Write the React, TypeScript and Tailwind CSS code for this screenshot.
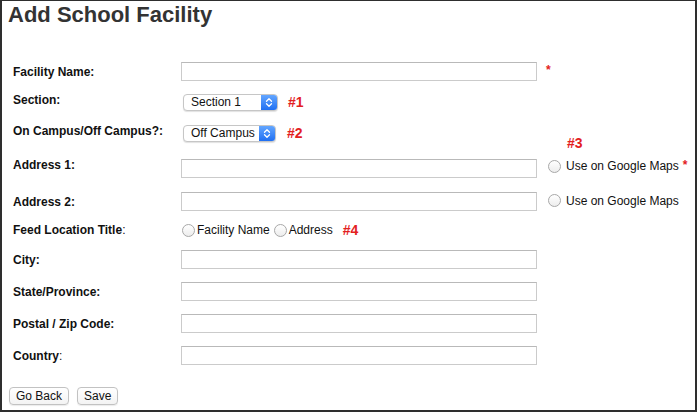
import React from "react";

const Label = ({
  children,
  className = "",
}: {
  children: React.ReactNode;
  className?: string;
}) => (
  <div
    className={`w-[168px] shrink-0 text-[12px] leading-[14px] font-bold text-[#111] ${className}`}
  >
    {children}
  </div>
);

const TextInput = ({ className = "" }: { className?: string }) => (
  <input
    type="text"
    className={`block w-[356px] h-[19px] shrink-0 border border-[#cbcbcb] border-t-[#b9b9b9] bg-white px-1 text-[12px] outline-none ${className}`}
  />
);

const Radio = () => (
  <span className="inline-block w-[13px] h-[13px] shrink-0 rounded-full border border-[#a8a8a8] bg-gradient-to-b from-white to-[#ededed]" />
);

const Hash = ({
  children,
  className = "leading-[17px]",
}: {
  children: React.ReactNode;
  className?: string;
}) => (
  <span className={`text-[14px] font-bold text-[#e3211e] ${className}`}>{children}</span>
);

const Star = ({ className = "" }: { className?: string }) => (
  <span className={`text-[12px] leading-[14px] font-bold text-[#e3211e] ${className}`}>*</span>
);

const MacSelect = ({ label, width }: { label: string; width: string }) => (
  <div
    className={`flex h-[17px] ${width} overflow-hidden rounded-[4px] border border-[#c6c6c6] bg-white shadow-[0_1px_1px_rgba(0,0,0,0.12)]`}
  >
    <span className="flex-1 pl-[7px] text-[12px] leading-[15px] text-[#111] whitespace-nowrap">
      {label}
    </span>
    <span className="flex w-[16px] items-center justify-center bg-gradient-to-b from-[#63a6ff] to-[#1f6ff2]">
      <svg width="8" height="11" viewBox="0 0 8 11">
        <path
          d="M1.5 4.2 L4 1.7 L6.5 4.2 M1.5 6.8 L4 9.3 L6.5 6.8"
          stroke="white"
          strokeWidth="1.3"
          fill="none"
          strokeLinecap="round"
          strokeLinejoin="round"
        />
      </svg>
    </span>
  </div>
);

const Button = ({ children }: { children: React.ReactNode }) => (
  <button
    type="button"
    className="h-[18px] rounded-[4px] border border-[#c2c2c2] bg-gradient-to-b from-white to-[#f3f3f3] px-[6px] text-[12px] leading-[14px] text-[#111] shadow-[0_1px_1px_rgba(0,0,0,0.08)]"
  >
    {children}
  </button>
);

export default function App() {
  return (
    <div className="w-[697px] h-[412px] overflow-hidden border-2 border-t border-[#2e2e2e] bg-white font-['Liberation_Sans',Arial,sans-serif]">
      <h1 className="ml-[6px] mt-[1px] text-[22px] leading-[26px] font-bold text-[#333]">
        Add School Facility
      </h1>

      <div className="pl-[11px]">
        {/* Facility Name */}
        <div className="mt-[34px] flex h-[19px] items-center">
          <Label>Facility Name:</Label>
          <TextInput />
          <Star className="ml-[9px] -mt-[4px]" />
        </div>

        {/* Section */}
        <div className="mt-[12px] flex h-[18px] items-start">
          <Label>Section:</Label>
          <div className="mt-[1px] ml-[2px] flex items-center">
            <MacSelect label="Section 1" width="w-[95px]" />
            <Hash className="ml-[10px] leading-[17px]">#1</Hash>
          </div>
        </div>

        {/* Campus */}
        <div className="mt-[13px] flex h-[18px] items-start">
          <Label>On Campus/Off Campus?:</Label>
          <div className="mt-[1px] ml-[2px] flex items-center">
            <MacSelect label="Off Campus" width="w-[93px]" />
            <Hash className="ml-[11px] leading-[17px]">#2</Hash>
          </div>
        </div>

        {/* Address 1 */}
        <div className="flex items-start">
          <Label className="mt-[16px]">Address 1:</Label>
          <TextInput className="mt-[17px]" />
          <div className="ml-[11px] -mt-[6px] flex flex-col">
            <Hash className="pl-[19px] leading-[14px]">#3</Hash>
            <div className="mt-[9px] flex h-[14px] items-center text-[12px] text-[#111]">
              <Radio />
              <span className="ml-[5px] leading-[14px]">Use on Google Maps</span>
              <Star className="ml-[4px] -mt-[3px]" />
            </div>
          </div>
        </div>

        {/* Address 2 */}
        <div className="mt-[14px] flex h-[19px] items-center">
          <Label>Address 2:</Label>
          <TextInput />
          <div className="ml-[11px] -mt-[2px] flex items-center text-[12px] text-[#111]">
            <Radio />
            <span className="ml-[5px] leading-[14px]">Use on Google Maps</span>
          </div>
        </div>

        {/* Feed Location Title */}
        <div className="mt-[11px] flex h-[16px] items-center">
          <Label>
            Feed Location Title<span className="font-normal">:</span>
          </Label>
          <div className="ml-[1px] flex items-center text-[12px] leading-[14px] text-[#111]">
            <Radio />
            <span className="ml-[2px]">Facility Name</span>
            <span className="ml-[4px] flex">
              <Radio />
            </span>
            <span className="ml-[2px]">Address</span>
            <Hash className="ml-[10px] leading-[17px]">#4</Hash>
          </div>
        </div>

        <div className="mt-[12px] flex h-[19px] items-center">
          <Label>City:</Label>
          <TextInput />
        </div>
        <div className="mt-[13px] flex h-[19px] items-center">
          <Label>State/Province:</Label>
          <TextInput />
        </div>
        <div className="mt-[13px] flex h-[19px] items-center">
          <Label>Postal / Zip Code:</Label>
          <TextInput />
        </div>
        <div className="mt-[13px] flex h-[19px] items-center">
          <Label>
            Country<span className="font-normal">:</span>
          </Label>
          <TextInput />
        </div>
      </div>

      <div className="mt-[22px] flex gap-[8px] pl-[7px]">
        <Button>Go Back</Button>
        <Button>Save</Button>
      </div>
    </div>
  );
}
